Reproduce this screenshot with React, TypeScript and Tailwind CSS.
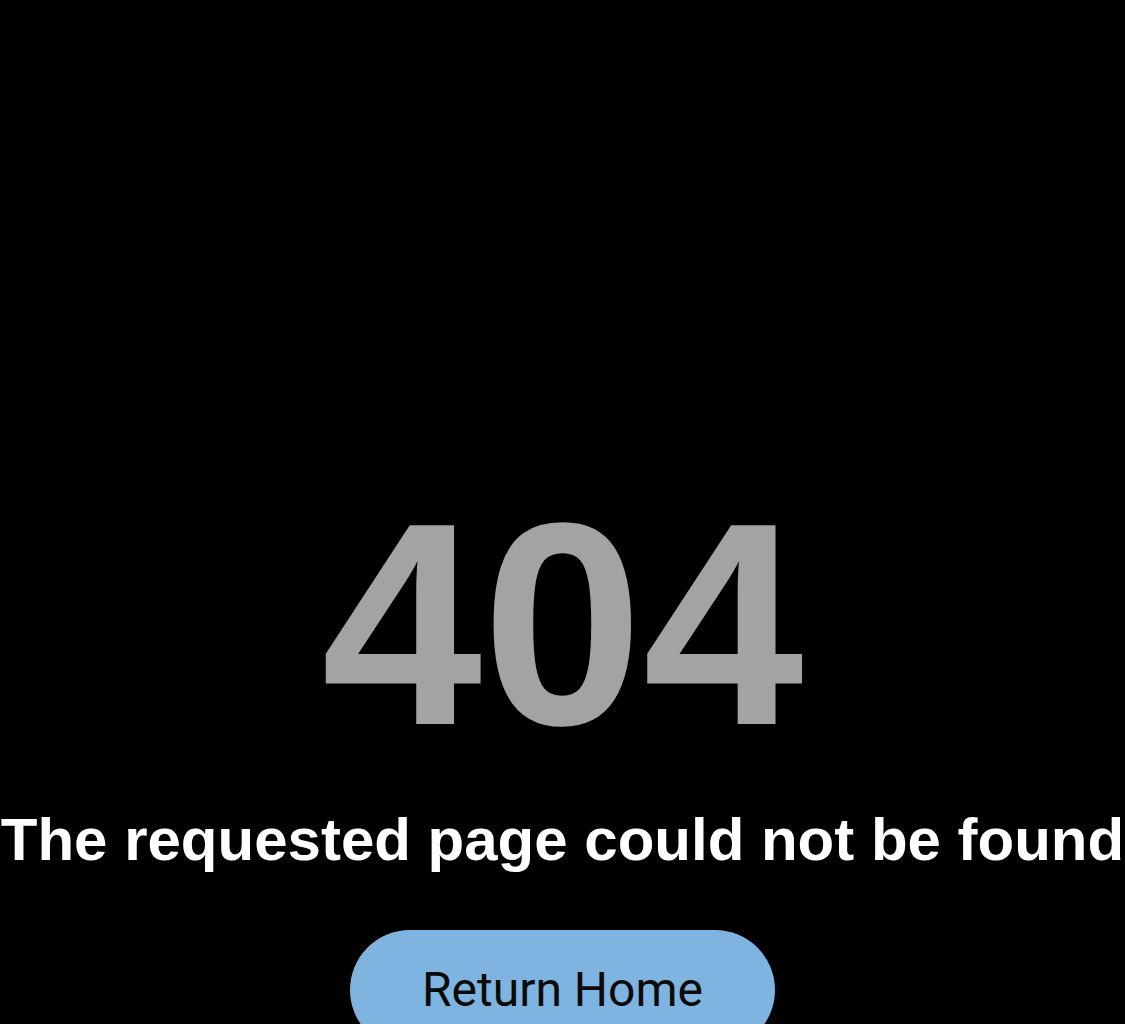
export default function App() {
  return (
    <div className="min-h-screen w-full bg-black overflow-hidden flex flex-col items-center pt-[479px] font-['Liberation_Sans',Arial,sans-serif]">
      <div className="text-[289px] leading-none font-bold text-[#a3a3a3]">404</div>
      <h1 className="mt-[42px] text-[60px] leading-none font-bold text-white whitespace-nowrap text-center">
        The requested page could not be found
      </h1>
      <button className="mt-[60px] rounded-full bg-[#7fb3e0] px-[72px] py-[24px] text-[48px] text-[#0a0a0a] font-['Roboto',sans-serif]">
        Return Home
      </button>
    </div>
  );
}
